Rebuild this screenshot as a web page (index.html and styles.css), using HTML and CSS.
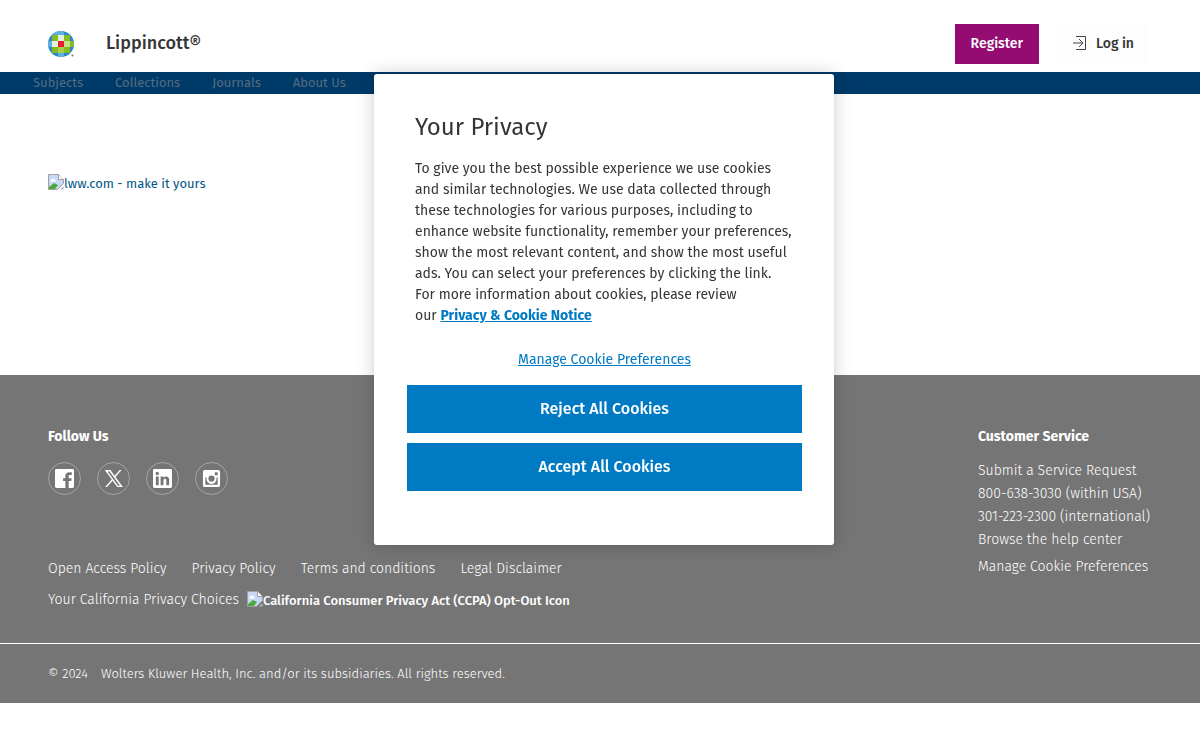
FILE: index.html
```html
<!DOCTYPE html>
<html lang="en">
<head>
<meta charset="utf-8">
<meta name="viewport" content="width=device-width, initial-scale=1">
<title>Lippincott</title>
<link rel="stylesheet" href="styles.css">
</head>
<body>
<header class="header">
  <a class="brand" href="#">
    <svg class="logo" viewBox="0 0 28 28" aria-hidden="true">
      <defs><clipPath id="disc"><circle cx="13" cy="14" r="13"/></clipPath></defs>
      <g clip-path="url(#disc)">
        <rect width="28" height="28" fill="#2b86c5"/>
        <path fill="#5fb0df" d="M10 0h6v5h-6zM0 11h4v6h-4zM10 23h6v5h-6zM4 0h6v5H4z"/>
        <path fill="#85bc22" d="M4 5h6v6h-6zM16 5h6v6h-6zM4 17h6v6h-6zM16 17h6v6h-6zM22 11h6v6h-6z"/>
        <path fill="#e3f1dc" d="M10 5h6v6h-6zM4 11h6v6h-6z"/>
        <path fill="#c5e08c" d="M16 11h6v6h-6z"/>
        <path fill="#a5cf4c" d="M10 17h6v6h-6z"/>
        <rect x="10" y="11" width="6" height="6" fill="#e5202b"/>
      </g>
      <circle cx="24.500" cy="25.500" r="1" fill="#777"/>
    </svg>
    <span>Lippincott®</span>
  </a>
  <div class="account">
    <button class="register" type="button">Register</button>
    <button class="login" type="button">
      <svg width="14" height="16" viewBox="0 0 14 16" fill="none" stroke="#444" aria-hidden="true"><path d="M3 1.500h9.500v13H3M0 8h10M6 4l4 4-4 4"/></svg>
      Log in
    </button>
  </div>
</header>
<nav class="nav" aria-label="Main">
  <a href="#">Subjects</a><a href="#">Collections</a><a href="#">Journals</a><a href="#">About Us</a>
</nav>
<main class="main">
  <a class="missing" href="#">
    <svg width="16" height="16" viewBox="0 0 16 16" aria-hidden="true"><path d="M.5.500h10l5 5v4l-6 6h-9z" fill="#c6d8f5" stroke="#a0a0a0"/><path d="M10.500.500v5h5" fill="#fff" stroke="#a0a0a0"/><path d="M3 6.500a2 2 0 0 1 4 0h1v1H2v-1z" fill="#fff"/><path d="M1 15v-2l5-4 4 2-3 4z" fill="#4fa83d"/><path d="M12 15.500h3.500V12z" fill="#b8b8b8"/></svg><span>lww.com - make it yours</span>
  </a>
</main>
<footer class="footer">
  <div class="footer-body">
    <div class="left">
      <h2>Follow Us</h2>
      <div class="social">
        <a href="#" aria-label="Facebook"><svg viewBox="0 0 20 20"><path fill="#fff" d="M1.500 0h17Q20 0 20 1.500v17Q20 20 18.500 20h-4.100v-7.300h2.700l.4-3h-3.100V7.800c0-1 .4-1.500 1.600-1.500h1.600V3.500c-4.600-.6-6.700.6-6.700 3.900v2.300H8.500v3h2.400V20H1.500Q0 20 0 18.500v-17Q0 0 1.500 0z"/></svg></a>
        <a href="#" aria-label="X"><svg viewBox="0 0 20 20"><path fill="#fff" fill-rule="evenodd" d="M.8 1h6l4.400 6L16.500 1h2l-6.400 7.300L20 19h-6l-5-6.600L3.200 19h-2l7-7.900zm3 1.500L14.700 17.500h2.200L5.900 2.500z"/></svg></a>
        <a href="#" aria-label="LinkedIn"><svg viewBox="0 0 20 20"><path fill="#fff" fill-rule="evenodd" d="M1.500 0h17Q20 0 20 1.500v17Q20 20 18.500 20h-17Q0 20 0 18.500v-17Q0 0 1.500 0zM3 8v9h3V8zM4.500 3a1.700 1.700 0 1 0 0 3.500 1.700 1.700 0 0 0 0-3.500zM8 8v9h3v-4.700c0-2.600 3-2.600 3 0V17h3v-5.500C17 7.500 13 6.800 11 9.300V8z"/></svg></a>
        <a href="#" aria-label="Instagram"><svg viewBox="0 0 20 20"><path fill="#fff" fill-rule="evenodd" d="M3 1h14q2 0 2 2v14q0 2-2 2H3q-2 0-2-2V3q0-2 2-2zm10.500 2.500v3h3v-3zM3.500 9v7q0 .7.700.7h11.600q.7 0 .7-.7V9h-1.400A5.300 5.300 0 1 1 4.900 9zM10 6.800a3.300 3.300 0 1 0 0 6.600 3.300 3.300 0 0 0 0-6.600z"/></svg></a>
      </div>
      <div class="links"><a href="#">Open Access Policy</a><a href="#">Privacy Policy</a><a href="#">Terms and conditions</a><a href="#">Legal Disclaimer</a></div>
      <div class="choices"><a href="#">Your California Privacy Choices</a>
        <a class="missing ccpa" href="#"><svg width="16" height="16" viewBox="0 0 16 16" aria-hidden="true"><path d="M.5.500h10l5 5v4l-6 6h-9z" fill="#c6d8f5" stroke="#a0a0a0"/><path d="M10.500.500v5h5" fill="#fff" stroke="#a0a0a0"/><path d="M3 6.500a2 2 0 0 1 4 0h1v1H2v-1z" fill="#fff"/><path d="M1 15v-2l5-4 4 2-3 4z" fill="#4fa83d"/><path d="M12 15.500h3.500V12z" fill="#b8b8b8"/></svg><span>California Consumer Privacy Act (CCPA) Opt-Out Icon</span></a>
      </div>
    </div>
    <div class="service">
      <h2>Customer Service</h2>
      <a href="#">Submit a Service Request</a>
      <a href="#">800-638-3030 (within USA)</a>
      <a href="#">301-223-2300 (international)</a>
      <a href="#">Browse the help center</a>
      <a class="manage" href="#">Manage Cookie Preferences</a>
    </div>
  </div>
  <div class="legal"><span>© 2024</span><span>Wolters Kluwer Health, Inc. and/or its subsidiaries. All rights reserved.</span></div>
</footer>
<section class="privacy" role="dialog" aria-labelledby="privacy-title">
  <div class="copy">
    <h1 id="privacy-title">Your Privacy</h1>
    <p>To give you the best possible experience we use cookies<br>and similar technologies. We use data collected through<br>these technologies for various purposes, including to<br>enhance website functionality, remember your preferences,<br>show the most relevant content, and show the most useful<br>ads. You can select your preferences by clicking the link.<br>For more information about cookies, please review<br>our <a href="#">Privacy &amp; Cookie Notice</a></p>
  </div>
  <button class="preferences" type="button">Manage Cookie Preferences</button>
  <button class="choice" type="button">Reject All Cookies</button>
  <button class="choice" type="button">Accept All Cookies</button>
</section>
</body>
</html>
```
FILE: styles.css
```css
* { box-sizing: border-box; }
body { margin: 0; background: #fff; color: #353535; font: 14px/21px "Fira Sans", Roboto, "Noto Sans", sans-serif; }
a { color: inherit; text-decoration: none; }
button { font: inherit; border: 0; cursor: pointer; }
h1, h2, p { margin: 0; }

.header { display: flex; justify-content: space-between; align-items: flex-start; height: 72px; padding: 24px 50px 0 48px; }
.brand { display: flex; align-items: center; gap: 30px; padding-top: 6px; font-size: 18px; line-height: 26px; font-weight: 500; color: #353535; }
.brand span { margin-bottom: 2px; }
.logo { width: 28px; height: 28px; }
.account { display: flex; gap: 18px; }
.account button { height: 40px; padding: 0 16px 2px; font-size: 14px; font-weight: 500; white-space: nowrap; }
.register { background: #940c72; color: #fff; min-width: 84px; }
.login { display: flex; align-items: center; gap: 9px; background: #fdfdfd; color: #353535; min-width: 92px; }

.nav { display: flex; gap: 32px; height: 22px; padding-left: 33px; background: #003a69; color: #546d80; font-size: 13px; line-height: 22px; }
.main { height: 281px; padding: 80px 48px 0; }
.missing { display: inline-flex; font-size: 13px; line-height: 19px; color: #005687; }

.footer { background: #757575; color: #fff; font-weight: 300; }
.footer-body { display: flex; justify-content: space-between; padding: 51px 48px 32px; }
.footer h2 { font-size: 14px; line-height: 22px; font-weight: 700; }
.social { display: flex; gap: 16px; margin: 14px 0 64px; }
.social a { display: grid; place-items: center; width: 33px; height: 33px; border: 1px solid #a5a5a5; border-radius: 50%; }
.social svg { width: 19px; height: 19px; }
.links { display: flex; gap: 25px; line-height: 20px; white-space: nowrap; }
.choices { display: flex; gap: 8px; margin-top: 11px; line-height: 20px; }
.ccpa { color: #fff; font-weight: 500; line-height: 21px; white-space: nowrap; }
.ccpa svg { margin-top: 1px; }
.service { display: flex; flex-direction: column; min-width: 174px; line-height: 23px; }
.service h2 { margin-bottom: 11px; }
.manage { margin-top: 4px; }
.legal { display: flex; gap: 13px; padding: 19px 48px; border-top: 1px solid #fff; font-size: 13px; line-height: 21px; }

.privacy { position: fixed; top: 74px; left: calc(50% - 226px); width: 460px; padding: 37px 32px 54px 33px; display: flex; flex-direction: column; background: #fff; border-radius: 3px; box-shadow: 0 0 18px rgba(0, 0, 0, .2); }
.copy { padding-left: 8px; }
.privacy h1 { font-size: 24px; line-height: 32px; font-weight: 400; margin-bottom: 15px; }
.privacy p { white-space: nowrap; }
.privacy p a { color: #007ac3; font-weight: 700; text-decoration: underline; }
.preferences { align-self: center; margin: 23px 0 15px; padding: 0; background: none; color: #007ac3; text-decoration: underline; line-height: 21px; }
.choice { height: 48px; padding: 0 0 2px; background: #007ac3; color: #fff; font-size: 16px; font-weight: 500; }
.choice + .choice { margin-top: 10px; }
```
